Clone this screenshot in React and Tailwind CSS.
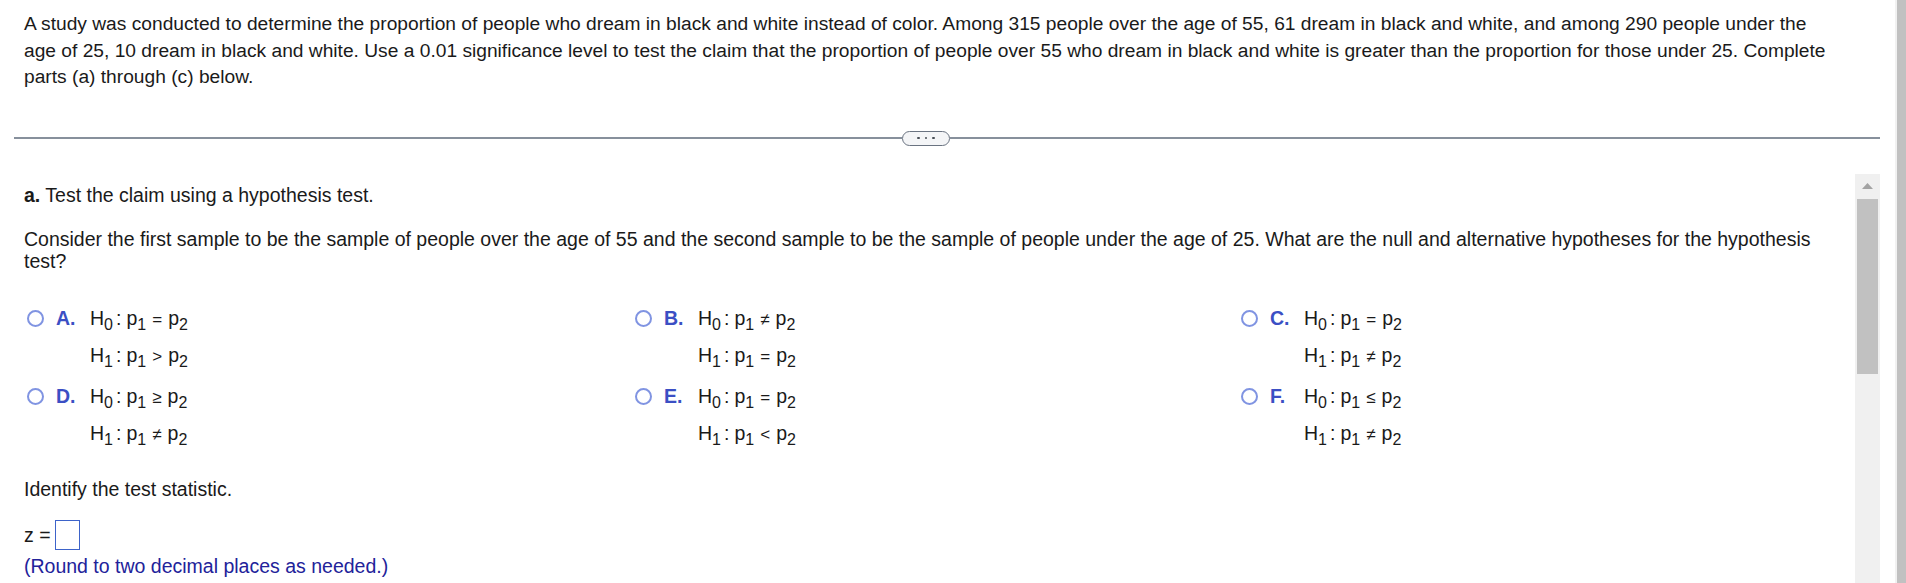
import React from 'react'

const options = [
  { key: 'A', h0: '=', h1: '>' },
  { key: 'B', h0: '≠', h1: '=' },
  { key: 'C', h0: '=', h1: '≠' },
  { key: 'D', h0: '≥', h1: '≠' },
  { key: 'E', h0: '=', h1: '<' },
  { key: 'F', h0: '≤', h1: '≠' },
]

function Sub({ children }) {
  return <span className="text-[16px] leading-none align-[-5px]">{children}</span>
}

function Hyp({ idx, op }) {
  return (
    <div className="h-[37px] leading-[37px] whitespace-nowrap">
      H<Sub>{idx}</Sub>
      <span className="ml-[3px] mr-[5px]">:</span>
      p<Sub>1</Sub>
      <span className="mx-[6px] text-[17px]">{op}</span>
      p<Sub>2</Sub>
    </div>
  )
}

function Option({ opt }) {
  return (
    <div className="flex items-start pl-[3px]">
      <span className="mt-[10px] w-[17px] h-[17px] rounded-full border-2 border-[#8094e2] shrink-0" />
      <span className="ml-[12px] w-[34px] shrink-0 font-bold text-[#3b4fc4] leading-[37px]">{opt.key}.</span>
      <div>
        <Hyp idx="0" op={opt.h0} />
        <Hyp idx="1" op={opt.h1} />
      </div>
    </div>
  )
}

export default function App() {
  return (
    <div className="flex h-[583px] overflow-hidden bg-white font-['Liberation_Sans',Arial,sans-serif] text-[19.5px] text-[#1a1a1a]">
      <div className="flex-1 min-w-0 flex flex-col">
        <p className="pl-6 pr-[25px] pt-[11px] text-[19.2px] leading-[26.5px]">
          A study was conducted to determine the proportion of people who dream in black and white instead of color. Among 315 people over the age of 55, 61 dream in black and white, and among 290 people under the
          <br />
          age of 25, 10 dream in black and white. Use a 0.01 significance level to test the claim that the proportion of people over 55 who dream in black and white is greater than the proportion for those under 25. Complete
          <br />
          parts (a) through (c) below.
        </p>

        {/* divider with collapse handle */}
        <div className="mt-[40px] flex items-center pl-[14px] pr-[15px]">
          <div className="w-[888px] h-[1.5px] bg-[#87909c]" />
          <div className="w-[48px] h-[15px] rounded-full border border-[#6a7381] bg-[#f4f5f7] flex items-center justify-center gap-[5px]">
            <span className="w-[2.5px] h-[2.5px] rounded-full bg-[#4a4f57]" />
            <span className="w-[2.5px] h-[2.5px] rounded-full bg-[#4a4f57]" />
            <span className="w-[2.5px] h-[2.5px] rounded-full bg-[#4a4f57]" />
          </div>
          <div className="flex-1 h-[1.5px] bg-[#87909c]" />
        </div>

        <div className="mt-[28px] flex flex-1 min-h-0">
          <div className="flex-1 min-w-0 pl-6 pr-[20px] pt-[10px] leading-[22px]">
            <p><span className="font-bold">a.</span> Test the claim using a hypothesis test.</p>
            <p className="mt-[22px]">
              Consider the first sample to be the sample of people over the age of 55 and the second sample to be the sample of people under the age of 25. What are the null and alternative hypotheses for the hypothesis test?
            </p>

            <div className="mt-[28px] grid grid-cols-[608px_606px_1fr] gap-y-[4px]">
              {options.map((o) => (
                <Option key={o.key} opt={o} />
              ))}
            </div>

            <p className="mt-[26px]">Identify the test statistic.</p>
            <div className="mt-[20px] flex items-center">
              <span>z =</span>
              <span className="ml-[4px] w-[25px] h-[30px] border border-[#3d63c9]" />
            </div>
            <p className="mt-[5px] text-[#22229a]">(Round to two decimal places as needed.)</p>
          </div>

          {/* inner scrollbar */}
          <div className="w-[25px] mr-[15px] bg-[#f0f0f0] flex flex-col items-center shrink-0">
            <div className="h-[25px] flex items-center justify-center">
              <svg width="11" height="6" viewBox="0 0 11 6">
                <path d="M5.5 0 L11 6 L0 6 Z" fill="#a3a3a3" />
              </svg>
            </div>
            <div className="w-[21px] h-[175px] bg-[#c1c1c1]" />
          </div>
        </div>
      </div>

      {/* outer scrollbar */}
      <div className="w-[11px] shrink-0 border-l-2 border-[#f1f1f1] bg-[#c1c1c1]" />
    </div>
  )
}
